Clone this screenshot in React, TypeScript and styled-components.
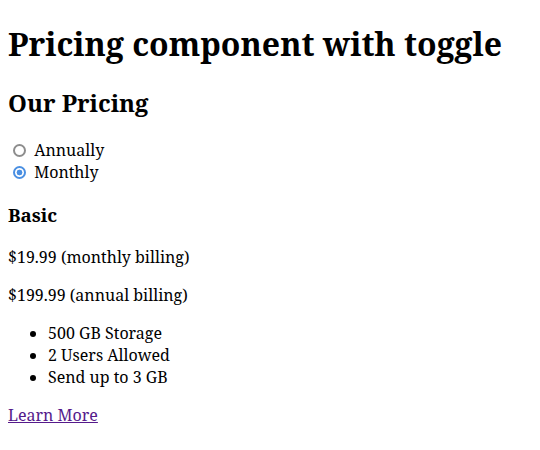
import React, { useState } from "react";
import styled, { createGlobalStyle } from "styled-components";

const GlobalStyle = createGlobalStyle`
  body {
    margin: 8px;
    font-family: "Noto Serif", "DejaVu Serif", serif;
    color: #000;
    background: #fff;
  }
`;

const Page = styled.main`
  display: block;
`;

const Title = styled.h1`
  font-size: 2em;
  font-weight: bold;
  margin: 14px 0 0.67em;
`;

const SectionTitle = styled.h2`
  font-size: 1.5em;
  font-weight: bold;
  margin: 0.83em 0;
`;

const Toggle = styled.div`
  display: block;
`;

const Option = styled.div`
  display: block;
`;

const Radio = styled.input`
  appearance: none;
  -webkit-appearance: none;
  box-sizing: border-box;
  width: 13px;
  height: 13px;
  margin: 3px 4px 0 5px;
  border: 2px solid #8d8d8d;
  border-radius: 50%;
  background: #fff;
  vertical-align: -1px;
  &:checked {
    border-color: #4a8fe2;
    background: radial-gradient(circle, #4a8fe2 0 2.6px, #fff 3.2px);
  }
`;

const PlanName = styled.h3`
  font-size: 1.17em;
  font-weight: bold;
  margin: 1em 0;
`;

const Price = styled.p`
  margin: 1em 0;
`;

const Features = styled.ul`
  margin: 1em 0;
  padding-left: 40px;
`;

const LinkRow = styled.p`
  margin: 1em 0;
`;

const MoreLink = styled.a`
  color: #551a8b;
  text-decoration: underline;
`;

export default function App() {
  const [billing, setBilling] = useState<"annually" | "monthly">("monthly");
  return (
    <>
      <GlobalStyle />
      <Page>
        <Title>Pricing component with toggle</Title>
        <SectionTitle>Our Pricing</SectionTitle>
        <Toggle>
          <Option>
            <Radio
              type="radio"
              id="annually"
              name="billing"
              checked={billing === "annually"}
              onChange={() => setBilling("annually")}
            />{" "}
            <label htmlFor="annually">Annually</label>
          </Option>
          <Option>
            <Radio
              type="radio"
              id="monthly"
              name="billing"
              checked={billing === "monthly"}
              onChange={() => setBilling("monthly")}
            />{" "}
            <label htmlFor="monthly">Monthly</label>
          </Option>
        </Toggle>
        <PlanName>Basic</PlanName>
        <Price>$19.99 (monthly billing)</Price>
        <Price>$199.99 (annual billing)</Price>
        <Features>
          <li>500 GB Storage</li>
          <li>2 Users Allowed</li>
          <li>Send up to 3 GB</li>
        </Features>
        <LinkRow>
          <MoreLink href="#">Learn More</MoreLink>
        </LinkRow>
      </Page>
    </>
  );
}
